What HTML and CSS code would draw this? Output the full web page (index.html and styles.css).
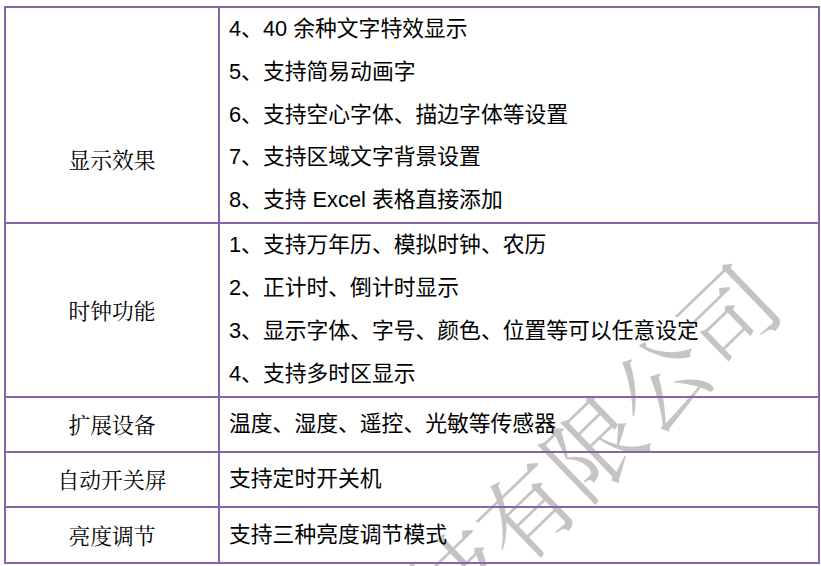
FILE: index.html
```
<!DOCTYPE html>
<html lang="zh-CN">
<head>
<meta charset="utf-8">
<title>功能参数</title>
<link rel="stylesheet" href="styles.css">
</head>
<body>
<div class="page">
  <table class="spec">
    <colgroup><col class="col-label"><col class="col-items"></colgroup>
    <tr class="r1">
      <td class="label label-low">显示效果</td>
      <td class="items">
        <div class="line">4、40 余种文字特效显示</div>
        <div class="line">5、支持简易动画字</div>
        <div class="line">6、支持空心字体、描边字体等设置</div>
        <div class="line">7、支持区域文字背景设置</div>
        <div class="line">8、支持 Excel 表格直接添加</div>
      </td>
    </tr>
    <tr class="r2">
      <td class="label">时钟功能</td>
      <td class="items">
        <div class="line">1、支持万年历、模拟时钟、农历</div>
        <div class="line">2、正计时、倒计时显示</div>
        <div class="line">3、显示字体、字号、颜色、位置等可以任意设定</div>
        <div class="line">4、支持多时区显示</div>
      </td>
    </tr>
    <tr class="r3">
      <td class="label">扩展设备</td>
      <td class="items"><div class="line">温度、湿度、遥控、光敏等传感器</div></td>
    </tr>
    <tr class="r3">
      <td class="label">自动开关屏</td>
      <td class="items"><div class="line">支持定时开关机</div></td>
    </tr>
    <tr class="r4">
      <td class="label">亮度调节</td>
      <td class="items"><div class="line">支持三种亮度调节模式</div></td>
    </tr>
  </table>
  <div class="watermark">科技有限公司</div>
</div>
</body>
</html>
```
FILE: styles.css
```
html, body {
  margin: 0;
  padding: 0;
  background: #ffffff;
}

.page {
  position: relative;
  width: 821px;
  height: 566px;
  overflow: hidden;
  padding: 6px 0 0 4px;
  box-sizing: border-box;
}

.spec {
  position: relative;
  z-index: 1;
  border-collapse: collapse;
  table-layout: fixed;
  width: 814px;
  font-family: "Liberation Sans", "Noto Sans CJK SC", sans-serif;
  font-size: 21.8px;
  color: #000000;
}

.col-label { width: 214px; }
.col-items { width: 600px; }

.spec td {
  border: 2px solid #8466a8;
  padding: 0;
  vertical-align: middle;
}

.line {
  line-height: 42.8px;
  white-space: nowrap;
}

.label {
  text-align: center;
  font-family: "Noto Serif CJK SC", "Noto Sans CJK SC", serif;
  line-height: 42.8px;
}

.spec td.label-low {
  vertical-align: bottom;
  padding-bottom: 41px;
}

.spec td.items {
  padding-left: 9px;
}

.r1 { height: 215px; }
.r2 { height: 174px; }
.r3 { height: 55px; }
.r4 { height: 56px; }

.watermark {
  position: absolute;
  z-index: 0;
  left: 278px;
  top: 440px;
  width: 540px;
  height: 90px;
  line-height: 90px;
  font-size: 94px;
  text-align: center;
  white-space: nowrap;
  color: #c4c4c4;
  font-family: "Noto Serif CJK SC", "Noto Sans CJK SC", serif;
  font-weight: 400;
  transform: rotate(-44deg);
  transform-origin: 50% 50%;
}
```
